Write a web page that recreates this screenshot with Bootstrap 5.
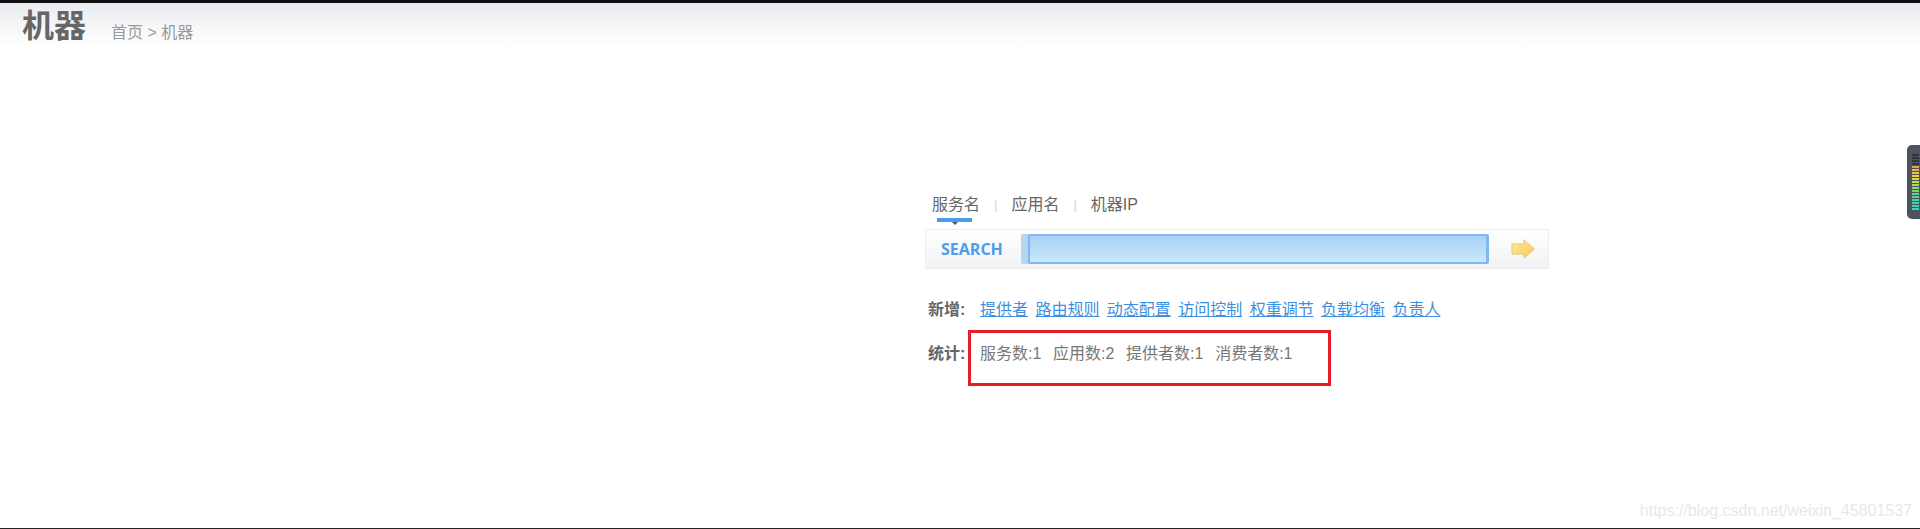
<!DOCTYPE html>
<html lang="zh-CN">
<head>
    <meta charset="UTF-8">
    <meta name="viewport" content="width=device-width, initial-scale=1.0">
    <title>机器</title>
    <link href="https://cdn.jsdelivr.net/npm/bootstrap@5.3.0/dist/css/bootstrap.min.css" rel="stylesheet">
    <style>
        html, body { height: 529px; overflow: hidden; }
        body {
            background: #fff;
            color: #666;
            font-family: "Liberation Sans", "Noto Sans CJK SC", sans-serif;
            font-size: 16px;
            border-top: 3px solid #111;
            border-bottom: 1px solid #222;
            position: relative;
        }
        .page-head {
            height: 42px;
            padding-left: 22px;
            background: linear-gradient(#e9ebee, #fff);
        }
        .page-title { font-size: 32px; font-weight: 700; line-height: 38px; color: #666; margin: 0; }
        .crumbs { font-size: 16px; color: #999; margin-left: 25px; line-height: 20px; padding-bottom: 2px; }
        .search-wrap { width: 624px; margin: 147px 0 0 925px; }
        .tab-row { padding-left: 7px; height: 37px; line-height: 26px; }
        .tab-item { color: #666; text-decoration: none; position: relative; }
        .tab-item.active::after {
            content: "";
            position: absolute;
            left: 5px; right: 8px; top: 26px;
            height: 4px;
            background: #4a9be8;
        }
        .tab-item.active::before {
            content: "";
            position: absolute;
            left: 20px; top: 30px;
            border: 3px solid transparent;
            border-top-color: #34607f;
            border-bottom: 0;
        }
        .tab-sep { color: #ccd3d8; margin: 0 14px; font-size: 13px; }
        .search-bar {
            height: 40px;
            border: 1px solid #eceef0;
            background: linear-gradient(#fff, #f1f2f4);
        }
        .search-label { width: 102px; padding-left: 15px; color: #4c9eec; font-weight: 700; font-size: 16px; font-family: "Open Sans", "Liberation Sans", sans-serif; }
        .search-field {
            width: 461px;
            height: 30px;
            border: 2px solid #82b6f5;
            border-right-width: 3px;
            border-radius: 2px;
            background: linear-gradient(#a6d0f5, #c9e9fd);
            box-shadow: -7px 0 0 #b4d6f0;
            outline: 0;
        }
        .go-arrow { margin-left: 22px; }
        .info-row { padding-left: 3px; line-height: 22px; }
        .info-name { font-weight: 700; color: #666; width: 52px; flex: none; }
        .add-row { margin-top: 30px; }
        .add-row a { color: #3f8fe0; margin-right: 7.4px; }
        .stat-box {
            width: 363px;
            height: 56px;
            margin-left: -12px;
            padding: 10px 0 0 9px;
            border: 3px solid #e81c24;
            gap: 11.700px;
            color: #777;
        }
        .stat-row { margin-top: 9px; }
        .stat-row .info-name { padding-top: 13px; }
        .meter {
            position: absolute;
            right: 0; top: 142px;
            width: 13px; height: 74px;
            padding: 9px 0 0 5px;
            background: #4d535d;
            border-radius: 5px 0 0 5px;
        }
        .meter i { display: block; width: 7px; height: 2px; margin-bottom: 1px; }
        .watermark { position: absolute; right: 8px; bottom: 5px; font-size: 16px; color: #e8e8e8; }
    </style>
</head>
<body>
    <div class="page-head d-flex align-items-end">
        <h1 class="page-title">机器</h1>
        <div class="crumbs">首页 &gt; 机器</div>
    </div>

    <div class="search-wrap">
        <div class="tab-row d-flex align-items-start">
            <a class="tab-item active" href="#">服务名</a>
            <span class="tab-sep">|</span>
            <a class="tab-item" href="#">应用名</a>
            <span class="tab-sep">|</span>
            <a class="tab-item" href="#">机器IP</a>
        </div>
        <div class="search-bar d-flex align-items-center">
            <div class="search-label">SEARCH</div>
            <input class="search-field" type="text">
            <svg class="go-arrow" width="25" height="20" viewBox="0 0 25 20">
                <defs>
                    <linearGradient id="arrowFill" x1="0" y1="0" x2="1" y2="1">
                        <stop offset="0" stop-color="#fdeb9c"/>
                        <stop offset="1" stop-color="#fcc55a"/>
                    </linearGradient>
                </defs>
                <path d="M1 5h12V1l10.500 9L13 19v-4H1z" fill="url(#arrowFill)" stroke="#e9c56c"/>
            </svg>
        </div>
        <div class="info-row add-row d-flex">
            <span class="info-name">新增:</span>
            <a href="#">提供者</a>
            <a href="#">路由规则</a>
            <a href="#">动态配置</a>
            <a href="#">访问控制</a>
            <a href="#">权重调节</a>
            <a href="#">负载均衡</a>
            <a href="#">负责人</a>
        </div>
        <div class="info-row stat-row d-flex">
            <span class="info-name">统计:</span>
            <div class="stat-box d-flex">
                <span>服务数:1</span>
                <span>应用数:2</span>
                <span>提供者数:1</span>
                <span>消费者数:1</span>
            </div>
        </div>
    </div>

    <div class="meter" id="meter"></div>
    <div class="watermark">https://blog.csdn.net/weixin_45801537</div>

    <script>
        // 右侧音量条
        const colors = ['#2f3540','#2f3540','#2f3540','#2f3540','#e2a45a','#e6b24e','#e8c244','#e8d040','#dcd848','#c8da50','#aed85c','#94d46a','#7cd27a','#68d08a','#58d09a','#4cd0a8','#44d0b0','#40d0b8','#40d0b8'];
        const meter = document.getElementById('meter');
        colors.forEach(c => {
            const bar = document.createElement('i');
            bar.style.background = c;
            meter.appendChild(bar);
        });
    </script>
    <script src="https://cdn.jsdelivr.net/npm/bootstrap@5.3.0/dist/js/bootstrap.bundle.min.js"></script>
</body>
</html>
